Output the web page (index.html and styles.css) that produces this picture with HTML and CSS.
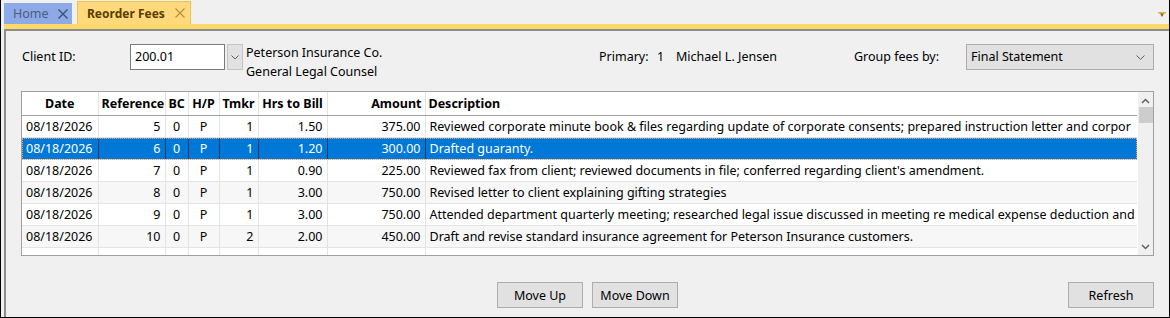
FILE: index.html
```html
<!DOCTYPE html>
<html lang="en">
<head>
	<meta charset="UTF-8">
	<title>Reorder Fees</title>
	<link rel="stylesheet" href="styles.css">
</head>
<body>
	<div class="window">
		<div class="tabbar">
			<div class="tab tab-home">
				<span>Home</span>
				<svg class="tab-close" width="10" height="10" viewBox="0 0 10 10"><path d="M0.5 0.5L9.5 9.5M9.5 0.5L0.5 9.5" stroke="#3f4d78" stroke-width="1.4" fill="none"/></svg>
			</div>
			<div class="tab tab-active">
				<span>Reorder Fees</span>
				<svg class="tab-close" width="10" height="10" viewBox="0 0 10 10"><path d="M0.5 0.5L9.5 9.5M9.5 0.5L0.5 9.5" stroke="#b7903a" stroke-width="1.2" fill="none"/></svg>
			</div>
			<svg class="tab-menu" width="8" height="6" viewBox="0 0 8 6"><rect x="0" y="0" width="8" height="1.5" fill="#d8b040"/><path d="M2 1.5H6L4 5Z" fill="#8a6410"/></svg>
		</div>
		<div class="tabstrip"></div>
		<div class="panel">
			<div class="client-row">
				<div class="client-label">Client ID:</div>
				<div class="client-input">200.01</div>
				<div class="drop-btn">
					<svg width="8" height="5" viewBox="0 0 8 5"><path d="M0.5 0.5L4 4L7.5 0.5" stroke="#606060" stroke-width="1" fill="none"/></svg>
				</div>
				<div class="client-name">Peterson Insurance Co.<br>General Legal Counsel</div>
				<div class="primary">
					<span class="primary-label">Primary:</span>
					<span class="primary-no">1</span>
					<span>Michael L. Jensen</span>
				</div>
				<div class="group-label">Group fees by:</div>
				<div class="select">
					<span>Final Statement</span>
					<svg width="9" height="5" viewBox="0 0 9 5"><path d="M0.5 0.5L4.5 4.3L8.5 0.5" stroke="#606060" stroke-width="1" fill="none"/></svg>
				</div>
			</div>

			<div class="grid">
				<table class="fees">
					<colgroup>
						<col style="width:76px"><col style="width:67px"><col style="width:23px"><col style="width:31px">
						<col style="width:39px"><col style="width:69px"><col style="width:98px"><col>
					</colgroup>
					<thead>
						<tr>
							<th class="c">Date</th>
							<th class="r">Reference</th>
							<th class="c">BC</th>
							<th class="c">H/P</th>
							<th class="c">Tmkr</th>
							<th class="c">Hrs to Bill</th>
							<th class="r">Amount</th>
							<th>Description</th>
						</tr>
					</thead>
					<tbody>
						<tr>
							<td>08/18/2026</td><td class="r">5</td><td class="c">0</td><td class="c">P</td><td class="r">1</td><td class="r">1.50</td><td class="r">375.00</td>
							<td>Reviewed corporate minute book &amp; files regarding update of corporate consents; prepared instruction letter and corpor</td>
						</tr>
						<tr class="selected">
							<td>08/18/2026</td><td class="r">6</td><td class="c">0</td><td class="c">P</td><td class="r">1</td><td class="r">1.20</td><td class="r">300.00</td>
							<td>Drafted guaranty.</td>
						</tr>
						<tr>
							<td>08/18/2026</td><td class="r">7</td><td class="c">0</td><td class="c">P</td><td class="r">1</td><td class="r">0.90</td><td class="r">225.00</td>
							<td>Reviewed fax from client; reviewed documents in file; conferred regarding client's amendment.</td>
						</tr>
						<tr>
							<td>08/18/2026</td><td class="r">8</td><td class="c">0</td><td class="c">P</td><td class="r">1</td><td class="r">3.00</td><td class="r">750.00</td>
							<td>Revised letter to client explaining gifting strategies</td>
						</tr>
						<tr>
							<td>08/18/2026</td><td class="r">9</td><td class="c">0</td><td class="c">P</td><td class="r">1</td><td class="r">3.00</td><td class="r">750.00</td>
							<td>Attended department quarterly meeting; researched legal issue discussed in meeting re medical expense deduction and</td>
						</tr>
						<tr>
							<td>08/18/2026</td><td class="r">10</td><td class="c">0</td><td class="c">P</td><td class="r">2</td><td class="r">2.00</td><td class="r">450.00</td>
							<td>Draft and revise standard insurance agreement for Peterson Insurance customers.</td>
						</tr>
						<tr class="partial">
							<td></td><td></td><td></td><td></td><td></td><td></td><td></td><td></td>
						</tr>
					</tbody>
				</table>
				<div class="scrollbar">
					<svg class="arrow" width="9" height="6" viewBox="0 0 9 6"><path d="M1 5L4.5 1.5L8 5" stroke="#606060" stroke-width="1.5" fill="none"/></svg>
					<div class="thumb"></div>
					<div class="track"></div>
					<svg class="arrow" width="9" height="6" viewBox="0 0 9 6"><path d="M1 1L4.5 4.5L8 1" stroke="#606060" stroke-width="1.5" fill="none"/></svg>
				</div>
			</div>

			<div class="buttons">
				<div class="btn-group">
					<button class="btn">Move Up</button>
					<button class="btn">Move Down</button>
				</div>
				<button class="btn btn-refresh">Refresh</button>
			</div>
		</div>
	</div>
</body>
</html>
```

FILE: styles.css
```css
body {
	margin: 0;
	font-family: "Noto Sans", "Open Sans", sans-serif;
	font-size: 12.5px;
	color: #000;
	background-color: #f0f0f0;
}
.window {
	width: 1170px;
	height: 318px;
	box-sizing: border-box;
	border-left: 1px solid #000;
	border-right: 1px solid #000;
	border-bottom: 1px solid #000;
	background-color: #f0f0f0;
	display: flex;
	flex-direction: column;
	overflow: hidden;
}
.tabbar {
	height: 24px;
	padding-left: 3px;
	display: flex;
	align-items: flex-end;
	gap: 5px;
	position: relative;
}
.tab {
	display: flex;
	align-items: center;
	box-sizing: border-box;
}
.tab-home {
	width: 68px;
	height: 21px;
	padding-left: 9px;
	background-color: #8eaae6;
	color: #4b5b84;
	font-size: 12.5px;
}
.tab-home .tab-close {
	margin-left: 9px;
}
.tab-active {
	width: 114px;
	height: 23px;
	padding-left: 9px;
	background-color: #ffd97c;
	border: 1px solid #f2c14e;
	border-bottom: none;
	color: #5a3d00;
	font-weight: bold;
	font-size: 12px;
}
.tab-active .tab-close {
	margin-left: 10px;
}
.tab-menu {
	position: absolute;
	right: 3px;
	top: 12px;
}
.tabstrip {
	height: 5px;
	margin-left: 3px;
	background-color: #ffd86c;
}
.panel {
	flex: 1;
	margin-left: 3px;
	border-top: 2px solid #8c8c8c;
	border-left: 2px solid #8c8c8c;
	padding: 13px 0 0 15px;
}
.client-row {
	display: flex;
	height: 26px;
	line-height: 26px;
}
.client-label {
	width: 108px;
	padding-left: 1px;
}
.client-input {
	width: 95px;
	height: 26px;
	box-sizing: border-box;
	border: 1px solid #7a7a7a;
	background-color: #fff;
	padding-left: 4px;
	line-height: 24px;
}
.drop-btn {
	width: 16px;
	height: 26px;
	box-sizing: border-box;
	margin-left: 2px;
	border: 1px solid #c4c4c4;
	background-color: #e1e1e1;
	display: flex;
	align-items: center;
	justify-content: center;
}
.client-name {
	width: 353px;
	margin-left: 3px;
	margin-top: -1px;
	line-height: 19px;
}
.primary {
	width: 255px;
	display: flex;
}
.primary-label {
	width: 58px;
}
.primary-no {
	width: 19px;
}
.group-label {
	width: 112px;
}
.select {
	width: 188px;
	height: 26px;
	box-sizing: border-box;
	border: 1px solid #adadad;
	background-color: #e1e1e1;
	padding: 0 8px 0 4px;
	line-height: 24px;
	display: flex;
	align-items: center;
	justify-content: space-between;
}
.grid {
	width: 1133px;
	height: 165px;
	box-sizing: border-box;
	margin-top: 21px;
	border: 1px solid #a0a0a0;
	background-color: #fff;
	display: flex;
	overflow: hidden;
}
.fees {
	width: 1115px;
	table-layout: fixed;
	border-collapse: collapse;
	flex: none;
}
.fees th, .fees td {
	height: 21px;
	padding: 0 4px;
	white-space: nowrap;
	overflow: hidden;
	border-left: 1px solid #e3e3e3;
	border-bottom: 1px solid #e3e3e3;
	text-align: left;
	line-height: 20px;
}
.fees th:first-child, .fees td:first-child {
	border-left: none;
}
.fees th {
	height: 23px;
	font-weight: bold;
	border-bottom: 1px solid #a0a0a0;
	padding: 0 3px;
}
.fees .c {
	text-align: center;
}
.fees .r {
	text-align: right;
}
.fees tbody tr:nth-child(even) {
	background-color: #f7f7f7;
}
.fees tbody tr.selected {
	background-color: #0078d7;
	color: #fff;
	outline: 1px dotted #f0a35c;
	outline-offset: -1px;
}
.fees tbody tr.selected td {
	border-left-color: #17375e;
}
.fees tbody tr.partial {
	background-color: #fff;
}
.scrollbar {
	width: 16px;
	margin-left: 1px;
	background-color: #f0f0f0;
	display: flex;
	flex-direction: column;
	align-items: center;
}
.scrollbar .arrow {
	margin: 6px 0 3px;
}
.scrollbar .arrow:last-child {
	margin: 3px 0 5px;
}
.thumb {
	width: 14px;
	height: 16px;
	background-color: #cdcdcd;
}
.track {
	flex: 1;
}
.buttons {
	width: 1133px;
	margin-top: 26px;
	display: grid;
	grid-template-columns: 1fr auto 1fr;
}
.btn-group {
	grid-column: 2;
	display: flex;
	gap: 9px;
}
.btn {
	width: 86px;
	height: 26px;
	border: 1px solid #adadad;
	background-color: #e1e1e1;
	font-family: inherit;
	font-size: 12.5px;
	color: #000;
	padding: 0;
}
.btn-refresh {
	grid-column: 3;
	justify-self: end;
}
```
